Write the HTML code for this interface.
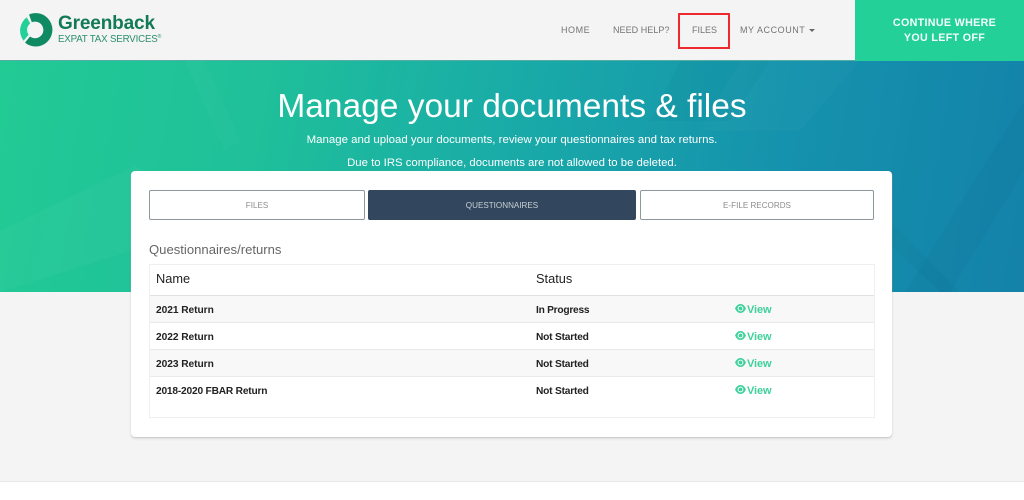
<!DOCTYPE html>
<html lang="en"><head><meta charset="utf-8"><title>Manage your documents &amp; files</title>
<style>
html,body{margin:0;padding:0;width:1024px;height:500px;overflow:hidden;background:#fff;font-family:"Liberation Sans",sans-serif}
.a{position:absolute;white-space:nowrap}
.c{transform:translateX(-50%)}
#page{position:relative;width:1024px;height:500px;overflow:hidden;background:#fff}
.nav{top:24px;font-size:9px;letter-spacing:.55px;color:#747474;line-height:12px}
.tab{box-sizing:border-box;top:190px;height:30px;border:1px solid #8e979c;border-radius:2px;background:#fff;color:#8c8c8c;font-size:8.100px;line-height:29px;text-align:center}
.row{left:150px;width:724px;box-sizing:border-box}
.t{font-size:10.200px;font-weight:bold;color:#222;line-height:14px;letter-spacing:-.05px}
.v{font-size:11px;font-weight:bold;color:#3fd19c;line-height:14px;letter-spacing:-.1px}
</style></head>
<body><div id="page">
<div class="a" style="left:0;top:0;width:1024px;height:61px;background:#f4f4f4"></div>
<svg class="a" style="left:19px;top:13px" width="34" height="34" viewBox="0 0 34 34">
<path d="M10 1.500A16.700 16.700 0 1 1 6 29.600L11 23.500A8.300 8.300 0 1 0 12.800 9.300Z" fill="#0f8a62"/>
<path d="M7.800 4.200L11.200 10.500A8.300 8.300 0 0 0 9.600 21.800L4.500 27.700A16.700 16.700 0 0 1 7.800 4.200Z" fill="#25cf98"/>
</svg>
<div class="a" style="left:58px;top:13px;font-size:19px;line-height:22px;font-weight:bold;color:#127a58;letter-spacing:-.15px">Greenback</div>
<div class="a" style="left:58px;top:34px;font-size:9.700px;line-height:12px;color:#2b8f6b;letter-spacing:-.15px">EXPAT TAX SERVICES<sup style="font-size:5px;line-height:0;vertical-align:4px">®</sup></div>
<div class="a nav" style="left:561px">HOME</div>
<div class="a nav" style="left:613px;letter-spacing:.05px">NEED HELP?</div>
<div class="a nav" style="left:692px;letter-spacing:0">FILES</div>
<div class="a nav" style="left:740px">MY ACCOUNT</div>
<div class="a" style="left:809px;top:29px;width:0;height:0;border-left:3px solid transparent;border-right:3px solid transparent;border-top:3px solid #666"></div>
<div class="a" style="left:678px;top:13px;width:52px;height:36px;box-sizing:border-box;border:2px solid #ee2a2e"></div>
<div class="a" style="left:855px;top:0;width:169px;height:61px;background:#23d098"></div>
<div class="a" style="left:855px;top:16px;width:179px;text-align:center;font-size:10.700px;font-weight:bold;line-height:15px;color:#f4fffb;letter-spacing:.33px">CONTINUE WHERE<br>YOU LEFT OFF</div>
<div class="a" style="left:0;top:61px;width:1024px;height:231px;overflow:hidden;background:linear-gradient(100deg,#22ca94 0%,#1fc09a 25%,#19aaa8 50%,#1592ad 75%,#1482a9 100%)">
<svg width="1024" height="231" style="position:absolute;left:0;top:0">
<path d="M0 170L135 105L180 125L130 190L0 231Z" fill="#fff" opacity=".03"/>
<path d="M185 0L225 90L240 80L205 0Z" fill="#fff" opacity=".025"/>
<path d="M680 0H770L730 60H650Z" fill="#000" opacity=".02"/>
<path d="M905 231L1024 40V110L950 231Z" fill="#000" opacity=".025"/>
<path d="M880 150L960 231H940L870 165Z" fill="#000" opacity=".025"/>
<path d="M740 0H860L800 70H700Z" fill="#fff" opacity=".02"/>
</svg></div>
<div class="a" style="left:0;top:60px;width:855px;height:1px;background:#0f8f80;opacity:.7"></div>
<div class="a c" style="left:512px;top:85px;font-size:33.500px;line-height:44px;color:#fff">Manage your documents &amp; files</div>
<div class="a c" style="left:512px;top:132px;font-size:11.450px;line-height:16px;color:#fff">Manage and upload your documents, review your questionnaires and tax returns.</div>
<div class="a c" style="left:512px;top:155px;font-size:11.350px;line-height:16px;color:#fff">Due to IRS compliance, documents are not allowed to be deleted.</div>
<div class="a" style="left:0;top:292px;width:1024px;height:189px;background:#f4f4f4"></div>
<div class="a" style="left:0;top:481px;width:1024px;height:1px;background:#e8e8e8"></div>
<div class="a" style="left:131px;top:171px;width:761px;height:266px;background:#fff;border-radius:4px;box-shadow:0 1px 1px #c9c9c9,0 2px 3px rgba(0,0,0,.08)"></div>
<div class="a tab" style="left:149px;width:216px">FILES</div>
<div class="a tab" style="left:368px;width:268px;background:#32475d;border-color:#32475d;color:#c9d0d6">QUESTIONNAIRES</div>
<div class="a tab" style="left:640px;width:234px">E-FILE RECORDS</div>
<div class="a" style="left:149px;top:241px;font-size:13.100px;line-height:17px;color:#666">Questionnaires/returns</div>
<div class="a" style="left:149px;top:264px;width:726px;height:154px;box-sizing:border-box;border:1px solid #efefef"></div>
<div class="a row" style="top:295px;height:28px;background:#f8f8f8;border-top:1.500px solid #e2e2e2;border-bottom:1px solid #eaeaea"></div>
<div class="a row" style="top:349px;height:28px;background:#f8f8f8;border-top:1px solid #eaeaea;border-bottom:1px solid #eaeaea"></div>
<div class="a" style="left:156px;top:271px;font-size:12.800px;line-height:16px;color:#222">Name</div>
<div class="a" style="left:536px;top:271px;font-size:12.800px;line-height:16px;color:#222">Status</div>
<div class="a t" style="left:156px;top:304px">2021 Return</div><div class="a t" style="left:536px;top:304px;letter-spacing:-.25px">In Progress</div>
<div class="a t" style="left:156px;top:331px">2022 Return</div><div class="a t" style="left:536px;top:331px;letter-spacing:-.2px">Not Started</div>
<div class="a t" style="left:156px;top:358px">2023 Return</div><div class="a t" style="left:536px;top:358px;letter-spacing:-.2px">Not Started</div>
<div class="a t" style="left:156px;top:385px;letter-spacing:-.2px">2018-2020 FBAR Return</div><div class="a t" style="left:536px;top:385px;letter-spacing:-.2px">Not Started</div>
<svg width="0" height="0" style="position:absolute"><defs><g id="eye"><path fill-rule="evenodd" d="M0 4.500C1.500 1.500 3.200 0 5.500 0S9.500 1.500 11 4.500C9.500 7.500 7.800 9 5.500 9S1.500 7.500 0 4.500ZM5.500 1.600A2.900 2.900 0 1 0 5.500 7.400A2.900 2.900 0 1 0 5.500 1.600Z" fill="#3fd19c"/><circle cx="5.500" cy="4.500" r="1.900" fill="#3fd19c"/></g></defs></svg>
<svg class="a" style="left:735px;top:304px" width="11" height="9"><use href="#eye"/></svg><div class="a v" style="left:747px;top:303px">View</div>
<svg class="a" style="left:735px;top:331px" width="11" height="9"><use href="#eye"/></svg><div class="a v" style="left:747px;top:330px">View</div>
<svg class="a" style="left:735px;top:358px" width="11" height="9"><use href="#eye"/></svg><div class="a v" style="left:747px;top:357px">View</div>
<svg class="a" style="left:735px;top:385px" width="11" height="9"><use href="#eye"/></svg><div class="a v" style="left:747px;top:384px">View</div>
</div></body></html>
